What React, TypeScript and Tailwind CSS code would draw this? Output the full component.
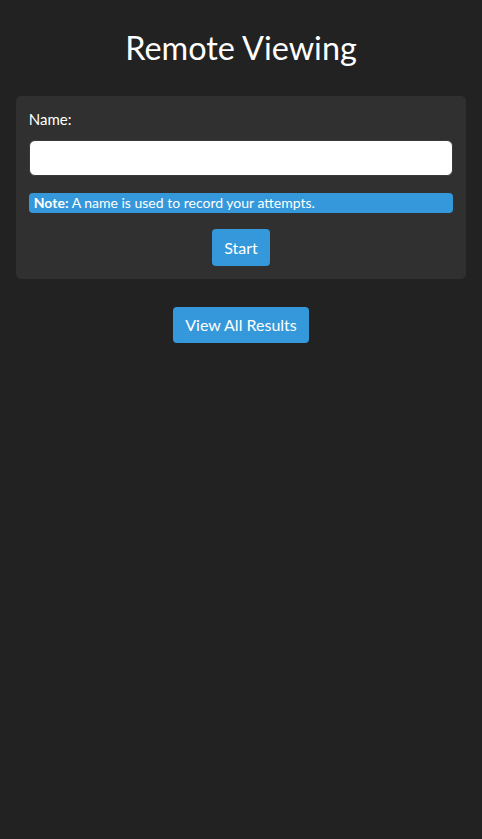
export default function App() {
  return (
    <div className="min-h-[839px] bg-[#222222] px-4 pt-[28px] font-['Lato',sans-serif] text-white">
      <h1 className="mb-[28px] text-center text-[32.4px] leading-[40px]">Remote Viewing</h1>

      <div className="rounded-[5px] bg-[#303030] px-[12.8px] pt-[13px] pb-[13px]">
        <label className="block text-[15px] leading-[20px]">Name:</label>
        <input
          type="text"
          className="mt-[11px] block h-[36px] w-full rounded-[6px] border border-[#3a3a3a] bg-white px-2 text-black outline-none"
        />
        <div className="mt-[17px] rounded-[4px] bg-[#3498db] px-[5px] text-[14px] leading-[20px]">
          <span className="font-bold">Note:</span> A name is used to record your attempts.
        </div>
        <div className="mt-[16px] flex justify-center">
          <button className="h-[37px] rounded-[4px] bg-[#3498db] px-[12px] text-[16px]">Start</button>
        </div>
      </div>

      <div className="mt-[28px] flex justify-center">
        <button className="h-[36px] rounded-[4px] bg-[#3498db] px-[12px] text-[16px]">View All Results</button>
      </div>
    </div>
  );
}
